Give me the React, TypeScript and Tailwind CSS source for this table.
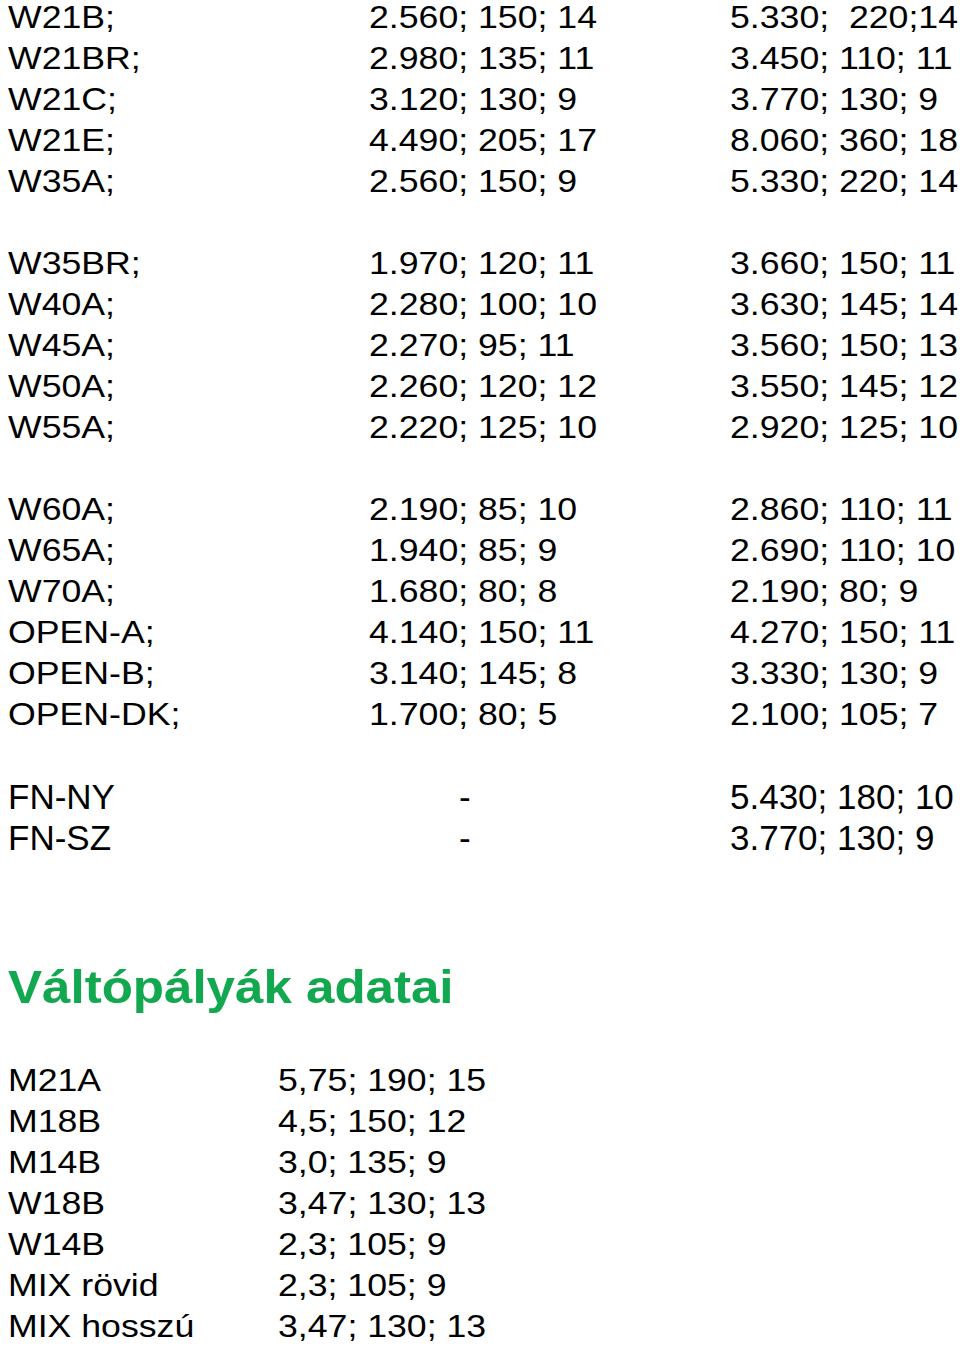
const rows: (string[] | null)[] = [
  ["W21B;", "2.560; 150; 14", "5.330;  220;14"],
  ["W21BR;", "2.980; 135; 11", "3.450; 110; 11"],
  ["W21C;", "3.120; 130; 9", "3.770; 130; 9"],
  ["W21E;", "4.490; 205; 17", "8.060; 360; 18"],
  ["W35A;", "2.560; 150; 9", "5.330; 220; 14"],
  null,
  ["W35BR;", "1.970; 120; 11", "3.660; 150; 11"],
  ["W40A;", "2.280; 100; 10", "3.630; 145; 14"],
  ["W45A;", "2.270; 95; 11", "3.560; 150; 13"],
  ["W50A;", "2.260; 120; 12", "3.550; 145; 12"],
  ["W55A;", "2.220; 125; 10", "2.920; 125; 10"],
  null,
  ["W60A;", "2.190; 85; 10", "2.860; 110; 11"],
  ["W65A;", "1.940; 85; 9", "2.690; 110; 10"],
  ["W70A;", "1.680; 80; 8", "2.190; 80; 9"],
  ["OPEN-A;", "4.140; 150; 11", "4.270; 150; 11"],
  ["OPEN-B;", "3.140; 145; 8", "3.330; 130; 9"],
  ["OPEN-DK;", "1.700; 80; 5", "2.100; 105; 7"],
  null,
];

const fnRows = [
  ["FN-NY", "5.430; 180; 10"],
  ["FN-SZ", "3.770; 130; 9"],
];

const switches = [
  ["M21A", "5,75; 190; 15"],
  ["M18B", "4,5; 150; 12"],
  ["M14B", "3,0; 135; 9"],
  ["W18B", "3,47; 130; 13"],
  ["W14B", "2,3; 105; 9"],
  ["MIX rövid", "2,3; 105; 9"],
  ["MIX hosszú", "3,47; 130; 13"],
];

// text in the source is stretched horizontally a bit
function Cell({ text }: { text: string }) {
  return (
    <span className="block w-fit origin-left scale-x-[1.15] whitespace-pre text-[31px] leading-[31px]">
      {text}
    </span>
  );
}

export default function App() {
  return (
    <div
      className="min-h-[1346px] w-[960px] overflow-hidden bg-white pl-2 pt-[2px] text-black"
      style={{ fontFamily: '"Liberation Sans", Arial, sans-serif' }}
    >
      {/* track data */}
      <div className="grid auto-rows-[41px] grid-cols-[361px_361px_1fr]">
        {rows.map((r, i) =>
          r ? (
            <div key={i} className="contents">
              <Cell text={r[0]} />
              <Cell text={r[1]} />
              <Cell text={r[2]} />
            </div>
          ) : (
            <div key={i} className="col-span-3" />
          )
        )}
        {fnRows.map((r) => (
          <div key={r[0]} className="contents text-[35px] leading-[31px]">
            <span>{r[0]}</span>
            <span className="pl-[90px]">-</span>
            <span className="whitespace-pre">{r[1]}</span>
          </div>
        ))}
      </div>

      <h2 className="mt-[96px] block w-fit origin-left scale-x-[1.11] text-[46px] font-bold leading-[56px] text-[#12a84f]">
        Váltópályák adatai
      </h2>

      <div className="mt-[50px] grid auto-rows-[41px] grid-cols-[270px_1fr]">
        {switches.map((r) => (
          <div key={r[0]} className="contents">
            <Cell text={r[0]} />
            <Cell text={r[1]} />
          </div>
        ))}
      </div>
    </div>
  );
}
